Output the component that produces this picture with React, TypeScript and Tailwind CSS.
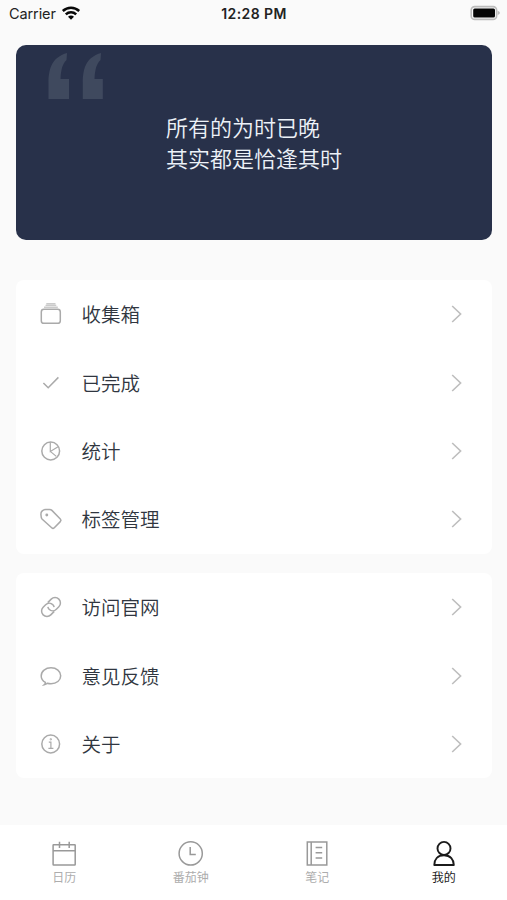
import type { ReactNode } from "react";

const listIcons: Record<string, ReactNode> = {
  inbox: (
    <>
      <rect x="2.3" y="7.3" width="19" height="14" rx="2.6" />
      <path d="M5 5.2h13.8M6.5 3.4h10.8M7.3 1.7h9.2" stroke="#cbcbcb" strokeWidth="1.4" />
    </>
  ),
  done: <path d="M4.4 12l4.8 4.8L19.4 6.4" />,
  chart: (
    <>
      <circle cx="11.7" cy="12" r="8.9" />
      <path d="M11.3 3.3v9.1l7.4-4.5M11.3 12.4l6 5" strokeWidth="1.2" />
    </>
  ),
  tag: (
    <path
      fillRule="evenodd"
      d="M1.9 7.4C1.7 4.5 4.1 2.5 6.6 2.5h4c.9 0 1.7.3 2.3.9l8.4 8.6c.9.9.9 1.7 0 2.6l-6 6.1c-.9.9-1.7.9-2.6 0L3 12c-.8-.8-1-2.8-1.1-4.6ZM7.8 7.3a.7.7 0 1 0 0 1.4.7.7 0 0 0 0-1.4Z"
    />
  ),
  link: (
    <g transform="rotate(-45 12 12)">
      <path d="M11.2 17.4H6.3a5.4 5.4 0 0 1 0-10.8h3.5c3.2 0 5.1 2.6 5.1 5.2 0 1-.3 1.8-.8 2.5" />
      <path d="M12.8 6.6h4.9a5.4 5.4 0 0 1 0 10.8h-3.5c-3.2 0-5.1-2.6-5.1-5.2 0-1 .3-1.8.8-2.5" />
    </g>
  ),
  feedback: (
    <path d="M6.4 18.4c-2.5-1.4-4.2-3.7-4.2-6.5 0-4.7 4.3-8.1 9.8-8.1s9.7 3.4 9.7 8-4.2 8-9.7 8c-1.3 0-2.5-.1-3.6-.5-1 .9-2 1.3-3.2 1.5.8-.7 1.2-1.4 1.2-2.4Z" />
  ),
  about: (
    <>
      <circle cx="11.7" cy="12" r="8.9" />
      <path d="M9.8 10.1h2.1v6M9.4 16.3h5" strokeWidth="1.2" />
      <circle cx="11.8" cy="7.3" r=".4" />
    </>
  ),
};

const tabIcons: Record<string, ReactNode> = {
  calendar: (
    <>
      <rect x="3.1" y="4.8" width="22.1" height="20.2" rx=".5" />
      <path d="M3.1 10.8h22.1M9.5 1.7v6.2M19.2 1.7v6.2" />
    </>
  ),
  clock: (
    <>
      <circle cx="13.7" cy="13.4" r="11.6" />
      <path d="M13.2 7v7.4h5.6" />
    </>
  ),
  notes: (
    <>
      <path d="M4.3 2.1h19.5V25H4.3ZM8.2 2.1V25" />
      <path d="M12.6 7.5h6.6M12.6 12.8h6.6M12.6 18h6.6" />
    </>
  ),
  user: (
    <>
      <circle cx="14" cy="8.4" r="6.5" />
      <path d="M4.3 25c0-5.3 3.2-9.7 9.7-9.7s9.8 4.4 9.8 9.7Z" strokeLinejoin="round" />
    </>
  ),
};

function MenuRow({ icon, label }: { icon: string; label: string }) {
  return (
    <button className="flex h-[68.4px] w-full items-center pl-[23px] pr-[29px]">
      <svg viewBox="0 0 24 24" className="size-6 shrink-0" fill="none" stroke="#aaa" strokeWidth="1.5">
        {listIcons[icon]}
      </svg>
      <span className="ml-[19px] flex-1 pb-[0.5px] text-left text-[19.5px] leading-none font-[350] text-[#303640]">{label}</span>
      <svg viewBox="0 0 12 20" className="h-5 w-3" fill="none" stroke="#bebebe" strokeWidth="1.6">
        <path d="M1.2 2l8.4 8-8.4 8" />
      </svg>
    </button>
  );
}

function Tab({ icon, label, active = false }: { icon: string; label: string; active?: boolean }) {
  return (
    <button className={`flex flex-1 flex-col items-center pt-[15px] ${active ? "text-[#1b1b1b]" : "text-[#999]"}`}>
      <svg viewBox="0 0 28 28" className="size-7" fill="none" stroke="currentColor" strokeWidth={active ? 1.9 : 1.5}>
        {tabIcons[icon]}
      </svg>
      <span className={`mt-[2px] text-[12px] leading-[14px] ${active ? "" : "text-[#adadad]"}`}>{label}</span>
    </button>
  );
}

export default function App() {
  return (
    <div className="flex h-[900px] w-[507px] flex-col bg-[#fafafa] font-['Noto_Sans_CJK_SC',sans-serif]">
      <header className="grid h-[44.5px] shrink-0 grid-cols-3 px-[9px] pt-[4px] font-[Inter,sans-serif] text-[14.5px] leading-5 text-[#222]">
        <div className="flex items-start gap-[5px]">
          <span className="tracking-[-0.1px]">Carrier</span>
          <svg viewBox="0 0 20 16" className="mt-px h-4 w-5" fill="none" stroke="#080808" strokeWidth="2.5">
            <path d="M1.8 6c4.7-4.4 11.7-4.4 16.4 0M4.8 9.3c3-2.8 7.4-2.8 10.4 0" />
            <path d="M10 14.8l-3-3c1.7-1.7 4.3-1.7 6 0Z" fill="#080808" stroke="none" />
          </svg>
        </div>
        <span className="pl-px text-center text-[14px] font-semibold tracking-[0.4px]">12:28 PM</span>
        <svg viewBox="0 0 32 16" className="mt-[1px] ml-auto -mr-[4px] h-4 w-8" fill="none">
          <rect x="1.2" y="1.6" width="25.4" height="12.8" rx="3.5" stroke="#bcbcbc" strokeWidth="1.6" />
          <rect x="3.2" y="3.4" width="21.8" height="9.2" rx="1.5" fill="#050505" />
          <path d="M27.6 5.8c3 1.3 3 3 0 4.4Z" fill="#bcbcbc" />
        </svg>
      </header>
      <main className="flex-1 px-[15.5px]">
        <section className="relative flex h-[195.5px] justify-center rounded-[10px] bg-[#28314a] pt-[66.5px]">
          <svg viewBox="0 0 56 48" className="absolute left-[32px] top-[7px] h-12 w-14" fill="#3f495e">
            <path d="M19 1C5 5 .5 15 .5 31v16H21V27H12.5C13 17 14.5 12 18.5 8Z" />
            <path d="M53 1C39 5 34.8 15 34.8 31v16h20V27h-8.3c.5-10 2-15 6-19Z" />
          </svg>
          <p className="ml-px text-[22px] leading-[30.5px] font-[350] text-[#edf2f8]">所有的为时已晚<br />其实都是恰逢其时</p>
        </section>
        <section className="mt-[40px] rounded-lg bg-white">
          <MenuRow icon="inbox" label="收集箱" />
          <MenuRow icon="done" label="已完成" />
          <MenuRow icon="chart" label="统计" />
          <MenuRow icon="tag" label="标签管理" />
        </section>
        <section className="mt-[19.5px] rounded-lg bg-white">
          <MenuRow icon="link" label="访问官网" />
          <MenuRow icon="feedback" label="意见反馈" />
          <MenuRow icon="about" label="关于" />
        </section>
      </main>
      <nav className="flex h-[75.5px] shrink-0 bg-white pl-px">
        <Tab icon="calendar" label="日历" />
        <Tab icon="clock" label="番茄钟" />
        <Tab icon="notes" label="笔记" />
        <Tab icon="user" label="我的" active />
      </nav>
    </div>
  );
}
